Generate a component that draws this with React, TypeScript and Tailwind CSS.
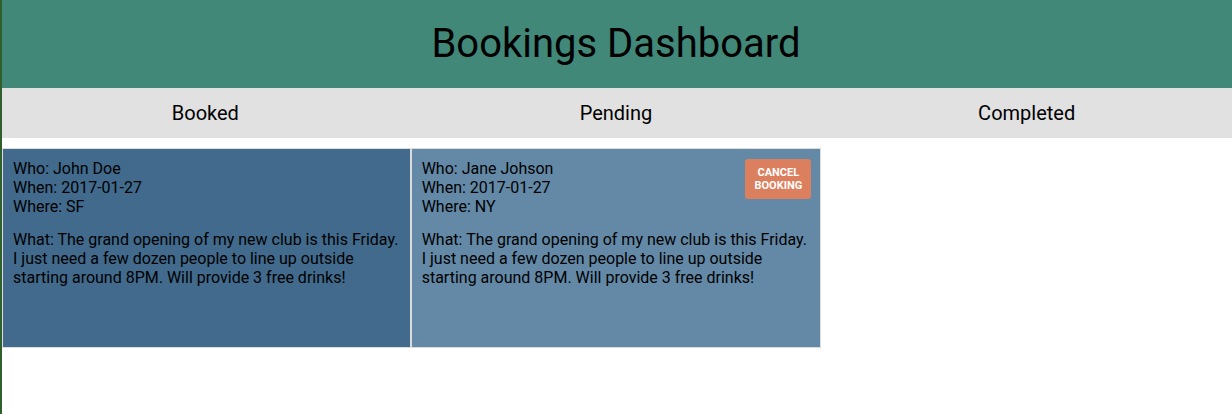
import { useState } from 'react'

interface Booking {
  id: number
  who: string
  when: string
  where: string
  what: string
  status: 'booked' | 'pending' | 'completed'
}

const bookings: Booking[] = [
  {
    id: 1,
    who: 'John Doe',
    when: '2017-01-27',
    where: 'SF',
    what: 'The grand opening of my new club is this Friday. I just need a few dozen people to line up outside starting around 8PM. Will provide 3 free drinks!',
    status: 'booked',
  },
  {
    id: 2,
    who: 'Jane Johson',
    when: '2017-01-27',
    where: 'NY',
    what: 'The grand opening of my new club is this Friday. I just need a few dozen people to line up outside starting around 8PM. Will provide 3 free drinks!',
    status: 'pending',
  },
]

const columns: { key: Booking['status']; label: string; bg: string }[] = [
  { key: 'booked', label: 'Booked', bg: 'bg-[#416a8c] ml-[2px]' },
  { key: 'pending', label: 'Pending', bg: 'bg-[#6389a7]' },
  { key: 'completed', label: 'Completed', bg: 'bg-[#6389a7]' },
]

function BookingCard({ booking, bg, onCancel }: { booking: Booking; bg: string; onCancel?: () => void }) {
  return (
    <div className={`relative h-[200px] border border-[#dcdcdc] pl-[10px] pr-[6px] pt-[10px] text-[16px] leading-[19px] text-black ${bg}`}>
      <div>Who: {booking.who}</div>
      <div>When: {booking.when}</div>
      <div>Where: {booking.where}</div>
      <p className="mt-[14px]">What: {booking.what}</p>
      {onCancel && (
        <button
          onClick={onCancel}
          className="absolute right-[9px] top-[10px] h-[40px] w-[66px] rounded-[3px] bg-[#dc7f5e] text-[11px] font-bold leading-[13px] text-white"
        >
          CANCEL
          <br />
          BOOKING
        </button>
      )}
    </div>
  )
}

export default function App() {
  const [items, setItems] = useState(bookings)

  return (
    <div className="relative min-h-[414px] bg-white font-['Roboto',sans-serif]">
      <div className="absolute inset-y-0 left-0 w-[2px] bg-[#2f5f2a]" />
      <header className="flex h-[88px] items-center justify-center bg-[#418878]">
        <h1 className="text-[40px] font-normal text-black">Bookings Dashboard</h1>
      </header>
      <nav className="grid h-[50px] grid-cols-3 bg-[#e1e1e1]">
        {columns.map((col) => (
          <div key={col.key} className="flex items-center justify-center text-[20px] text-black">
            {col.label}
          </div>
        ))}
      </nav>
      <div className="mt-[10px] grid grid-cols-3">
        {columns.map((col) => (
          <div key={col.key} className="flex flex-col">
            {items
              .filter((b) => b.status === col.key)
              .map((b) => (
                <BookingCard
                  key={b.id}
                  booking={b}
                  bg={col.bg}
                  onCancel={
                    b.status === 'pending'
                      ? () => setItems((current) => current.filter((x) => x.id !== b.id))
                      : undefined
                  }
                />
              ))}
          </div>
        ))}
      </div>
    </div>
  )
}
